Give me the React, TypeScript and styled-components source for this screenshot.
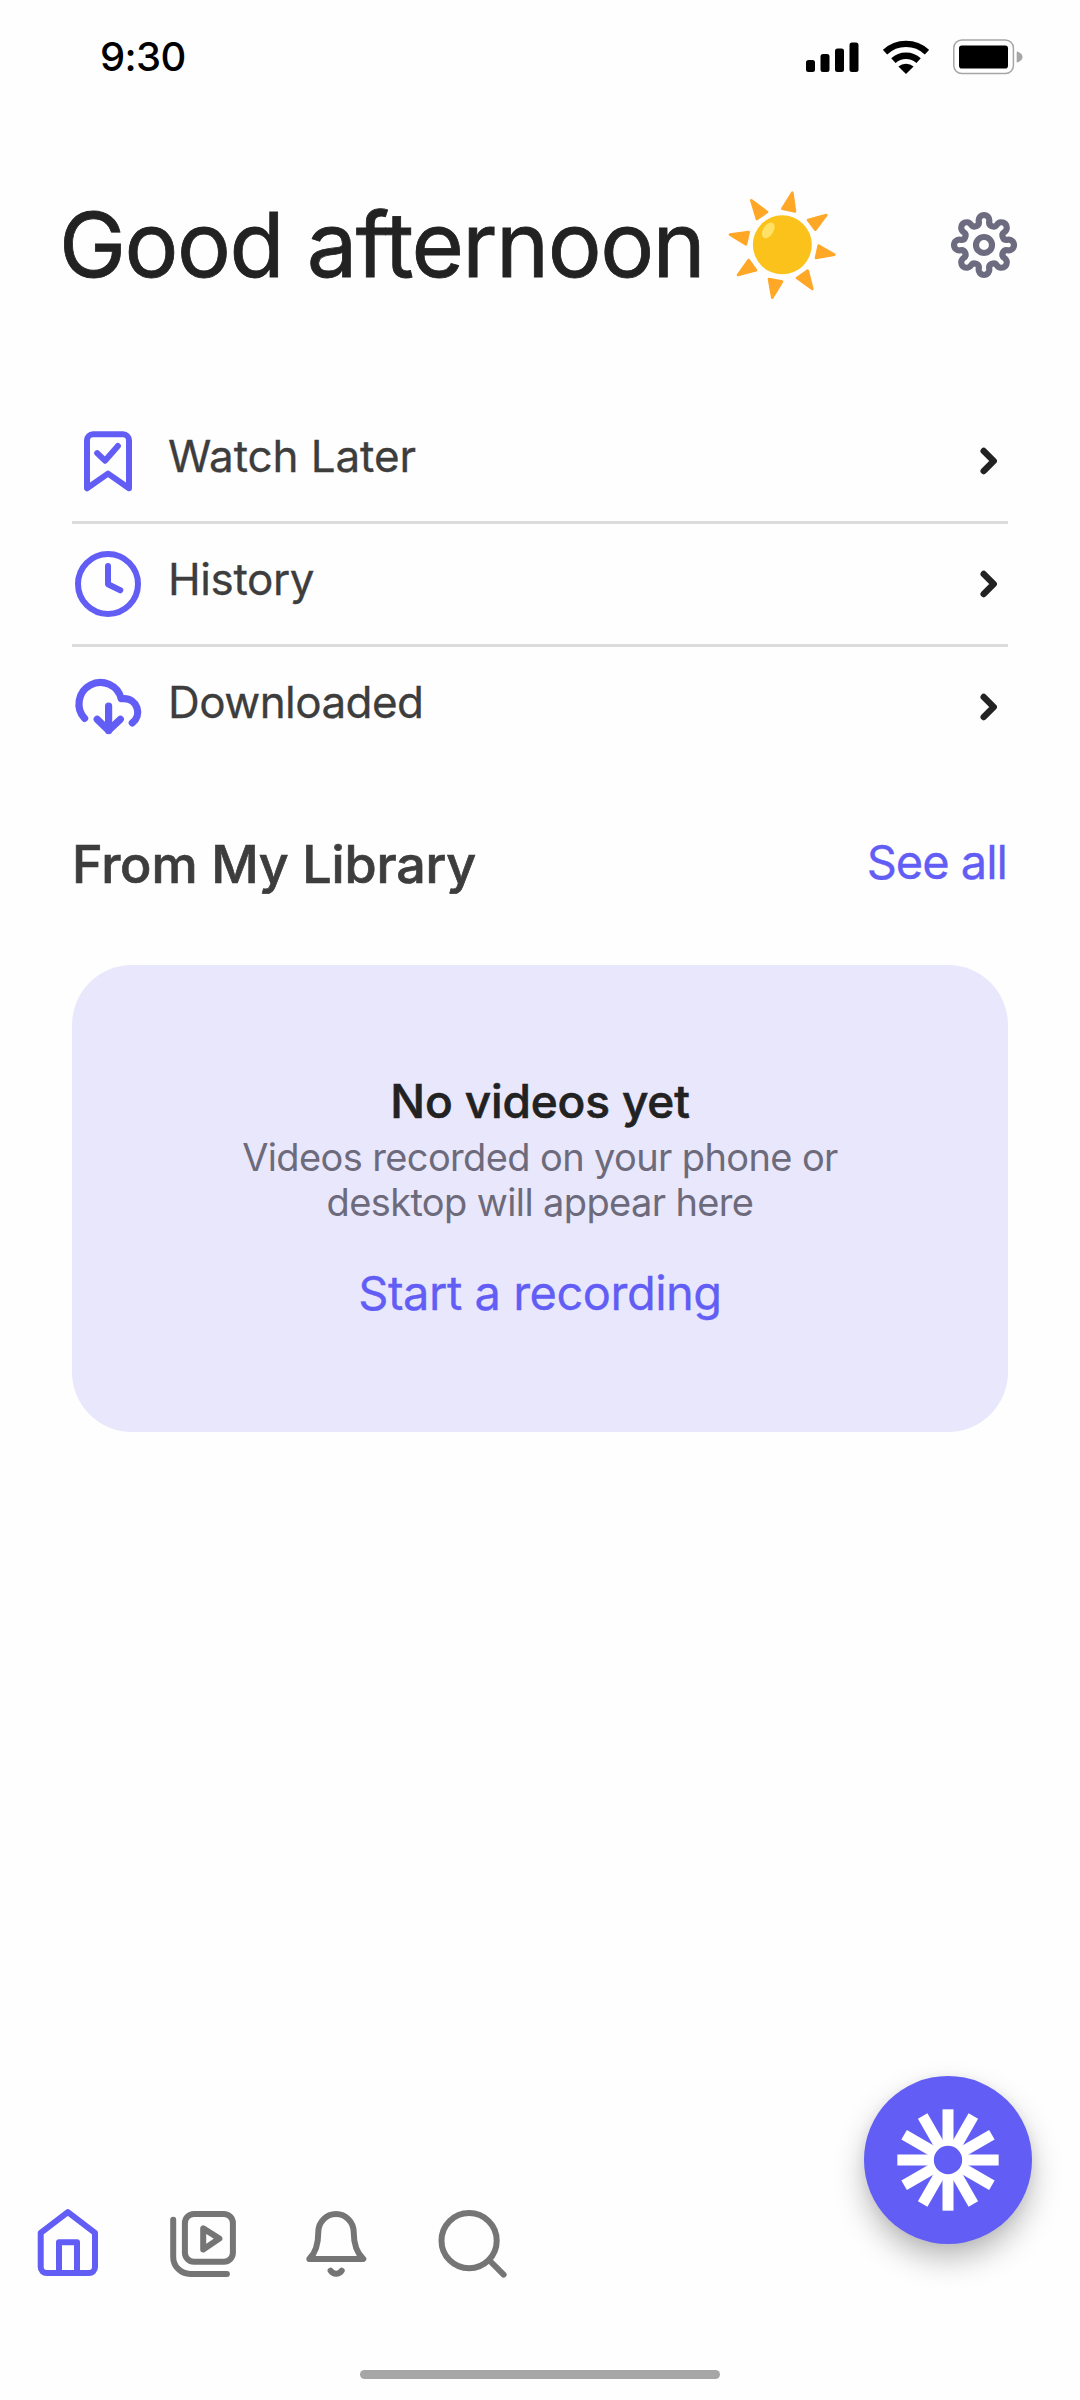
import React from "react";
import styled, { createGlobalStyle } from "styled-components";

const GlobalStyle = createGlobalStyle`
  body { margin: 0; background: #fefefe; }
  *, *::before, *::after { box-sizing: border-box; }
`;

const accent = "#625df5";
const ink = "#222222";

const Screen = styled.main`
  position: relative;
  display: flex;
  flex-direction: column;
  width: 1080px;
  height: 2400px;
  overflow: hidden;
  background: #fefefe;
  color: ${ink};
  font-family: Inter, "Liberation Sans", sans-serif;
`;

const StatusBar = styled.header`
  display: flex;
  align-items: center;
  justify-content: space-between;
  height: 113px;
  padding: 0 57px 0 100px;
  color: #000;
`;

const Time = styled.span`
  font-size: 40px;
  font-weight: 500;
  line-height: 48px;
  letter-spacing: -0.6px;
`;

const StatusIcons = styled.div`
  display: flex;
  align-items: center;
  gap: 24px;
`;

const Greeting = styled.section`
  display: flex;
  align-items: center;
  height: 264px;
  padding: 0 60px 0 59px;
`;

const Title = styled.h1`
  margin: 0 21px 0 0;
  font-size: 90px;
  font-weight: 400;
  line-height: 110px;
  letter-spacing: -1.55px;
  white-space: nowrap;
  -webkit-text-stroke: 0.8px ${ink};
`;

const IconButton = styled.button`
  display: flex;
  margin: 0 0 0 auto;
  padding: 0;
  border: 0;
  background: none;
`;

const Menu = styled.ul`
  display: flex;
  flex-direction: column;
  margin: 24px 72px 0;
  padding: 0;
  list-style: none;
`;

const MenuRow = styled.li`
  display: flex;
  align-items: center;
  height: 123px;
  border-bottom: 3px solid #dcdcdc;

  &:last-child { border-bottom-color: transparent; }
`;

const MenuLabel = styled.span<{ $tracking: number }>`
  flex: 1;
  padding: 0 0 10px 24px;
  color: #3d3d3d;
  font-size: 44px;
  line-height: 56px;
  letter-spacing: ${(p) => p.$tracking}px;
  -webkit-text-stroke: 0.3px #3d3d3d;
`;

const SectionHead = styled.div`
  display: flex;
  align-items: center;
  justify-content: space-between;
  height: 60px;
  margin: 64px 73px 71px 72px;
`;

const SectionTitle = styled.h2`
  margin: 0;
  padding-top: 1px;
  color: #3d3d3d;
  font-size: 52px;
  font-weight: 500;
  line-height: 60px;
  letter-spacing: -0.15px;
  -webkit-text-stroke: 0.7px #3d3d3d;
`;

const LinkText = styled.a<{ $tracking: number }>`
  color: ${accent};
  font-size: 47px;
  line-height: 56px;
  letter-spacing: ${(p) => p.$tracking}px;
  -webkit-text-stroke: 0.3px ${accent};
`;

const SeeAll = styled(LinkText)`
  padding-bottom: 5px;
`;

const EmptyCard = styled.section`
  display: flex;
  flex-direction: column;
  align-items: center;
  height: 467px;
  margin: 0 72px;
  padding-top: 102px;
  border-radius: 60px;
  background: #e9e7fc;
  text-align: center;
`;

const CardTitle = styled.h3`
  margin: 0;
  font-size: 46px;
  font-weight: 500;
  line-height: 68px;
  letter-spacing: -0.15px;
  -webkit-text-stroke: 0.6px ${ink};
`;

const CardText = styled.p`
  margin: 0 0 40px;
  color: #6d6b7b;
  font-size: 38px;
  line-height: 45px;
  letter-spacing: -0.62px;
`;

const TabBar = styled.nav`
  display: flex;
  gap: 62px;
  margin-top: auto;
  padding: 0 32px 90px;
  color: #757575;
`;

const Tab = styled.a<{ $active?: boolean }>`
  display: flex;
  color: ${(p) => (p.$active ? accent : "inherit")};
`;

const HomeIndicator = styled.div`
  flex: none;
  width: 360px;
  height: 9px;
  margin: 0 auto 21px;
  border-radius: 5px;
  background: #a6a6a6;
`;

const RecordButton = styled.button`
  position: absolute;
  right: 48px;
  bottom: 156px;
  display: flex;
  align-items: center;
  justify-content: center;
  width: 168px;
  height: 168px;
  padding: 0;
  border: 0;
  border-radius: 50%;
  background: ${accent};
  box-shadow: 0 15px 30px rgba(0, 0, 0, 0.26), 0 2px 12px rgba(0, 0, 0, 0.06);
`;

const StrokeSvg = styled.svg<{ $weight?: number }>`
  flex: none;
  display: block;
  width: 72px;
  height: 72px;
  overflow: visible;
  fill: none;
  stroke: currentColor;
  stroke-width: ${(p) => p.$weight ?? 2};
  stroke-linecap: round;
  stroke-linejoin: round;
`;

const AccentIcon = styled(StrokeSvg)`
  color: ${accent};
`;

const GearSvg = styled(StrokeSvg)`
  color: #6d6b7f;
`;

const ChevronSvg = styled.svg`
  flex: none;
  display: block;
  margin-right: 11px;
`;

/* Eight round lobes joined by eight concave notches. */
function gearPath() {
  const lobeR = 16;
  const notchR = 12.85;
  const ring = 74;
  const at = (deg: number, r: number) => {
    const a = (deg * Math.PI) / 180;
    return [r * Math.sin(a), -r * Math.cos(a)];
  };
  const join = (lobeDeg: number, notchDeg: number) => {
    const l = at(lobeDeg, ring);
    const n = at(notchDeg, ring);
    const t = lobeR / (lobeR + notchR);
    return `${(l[0] + (n[0] - l[0]) * t).toFixed(2)} ${(l[1] + (n[1] - l[1]) * t).toFixed(2)}`;
  };
  let d = `M${join(0, -22.5)}`;
  for (let i = 0; i < 8; i++) {
    const a = i * 45;
    d += `A${lobeR} ${lobeR} 0 1 1 ${join(a, a + 22.5)}`;
    d += `A${notchR} ${notchR} 0 0 0 ${join(a + 45, a + 22.5)}`;
  }
  return d + "Z";
}

const Gear = () => (
  <GearSvg viewBox="-108 -108 216 216" $weight={18.5}>
    <path d={gearPath()} />
    <circle r="24" />
  </GearSvg>
);

const Sun = () => (
  <svg width="115" height="115" viewBox="500 532 345 345">
    <g fill="#ffa726" stroke="#ffa726" strokeWidth="8" strokeLinejoin="round">
      <path d="M702 546 710 602 672 594Z" />
      <path d="M804 613 771 657 749 628Z" />
      <path d="M828 732 773 742 781 705Z" />
      <path d="M762 835 716 802 748 780Z" />
      <path d="M642 861 632 805 671 813Z" />
      <path d="M539 793 571 748 593 779Z" />
      <path d="M515 672 571 664 563 701Z" />
      <path d="M579 569 626 604 596 625Z" />
    </g>
    <circle cx="672" cy="702.5" r="88.5" fill="#fbc21c" />
    <ellipse cx="630" cy="659" rx="15.5" ry="26" transform="rotate(32 630 659)" fill="#ffe265" />
  </svg>
);

const Signal = () => (
  <svg width="53" height="30" viewBox="0 0 53 30">
    <rect x="0" y="18" width="9" height="12" rx="2.5" />
    <rect x="14.5" y="12" width="9" height="18" rx="2.5" />
    <rect x="29" y="6.5" width="9" height="23.5" rx="2.5" />
    <rect x="43.5" y="0.5" width="9" height="29.5" rx="2.5" />
  </svg>
);

const Wifi = () => (
  <svg width="46" height="34" viewBox="0 0 46 34">
    <path d="M23 34l-7.6-7.4a11.5 11.5 0 0 1 15.2 0Z" />
    <g fill="none" stroke="#000" strokeWidth="6.4">
      <path d="M10.4 20.6a18.6 18.6 0 0 1 25.2 0" />
      <path d="M2 12.2a30.6 30.6 0 0 1 42 0" />
    </g>
  </svg>
);

const Battery = () => (
  <svg width="70" height="36" viewBox="0 0 70 36">
    <rect x="0.8" y="1" width="59.6" height="33.6" rx="8" fill="#fff" stroke="#a6a6a6" strokeWidth="1.5" />
    <rect x="6" y="6.5" width="49" height="23" rx="2.8" />
    <path d="M63.7 12.4c3.4.8 5.8 3 5.8 5.5s-2.4 4.7-5.8 5.5Z" fill="#a6a6a6" />
  </svg>
);

const BookmarkCheck = () => (
  <AccentIcon viewBox="0 0 24 24">
    <path d="M5 21.1V5.1a2 2 0 0 1 2-2h10a2 2 0 0 1 2 2v16l-7-4.9Z" />
    <path d="M8.4 9.4 11 11.9 15.3 7" />
  </AccentIcon>
);

const Clock = () => (
  <AccentIcon viewBox="0 0 24 24">
    <circle cx="12" cy="12" r="10" />
    <path d="M12 6v6.1l4.1 2" />
  </AccentIcon>
);

const CloudDownload = () => (
  <AccentIcon viewBox="0 0 24 24" $weight={2.4}>
    <path d="M4.2 15.8A7.15 7.15 0 1 1 16.4 9.2h1A4.5 4.5 0 0 1 20.1 17.3" />
    <path d="M12.2 11.7v8.2M8.4 16.1l3.8 3.7 3.9-3.7" />
  </AccentIcon>
);

const Chevron = () => (
  <ChevronSvg width="18" height="28" viewBox="0 0 18 28">
    <path d="M4.7 4l10 10-10 10" fill="none" stroke={ink} strokeWidth="6.4" strokeLinecap="round" strokeLinejoin="round" />
  </ChevronSvg>
);

const HomeIcon = () => (
  <StrokeSvg viewBox="0 0 24 24">
    <path d="M11.95 1.4 21 8.3v11.4a2 2 0 0 1-2 2H4.9a2 2 0 0 1-2-2V8.3Z" />
    <path d="M9 21.4v-10h6v10" />
  </StrokeSvg>
);

const LibraryIcon = () => (
  <StrokeSvg viewBox="0 0 24 24">
    <path d="M2.4 3.9v12.4a5.7 5.7 0 0 0 5.7 5.7h12.2" />
    <rect x="6.3" y="2" width="16" height="15.9" rx="3" />
    <path d="M12.4 6.8v7l5.4-3.6Z" />
  </StrokeSvg>
);

const BellIcon = () => (
  <StrokeSvg viewBox="0 0 24 24">
    <path d="M3.1 17c2-1.9 3-5 3-9a5.9 6 0 0 1 11.8 0c0 4 1.2 7.1 3.2 9Z" />
    <path d="M10.2 20.9a2.2 2.2 0 0 0 3.7 0" />
  </StrokeSvg>
);

const SearchIcon = () => (
  <StrokeSvg viewBox="0 0 24 24">
    <circle cx="11.7" cy="10.9" r="9.2" />
    <path d="M18.5 17.5 23.2 22.2" />
  </StrokeSvg>
);

const Burst = () => (
  <svg width="102" height="102" viewBox="-153 -153 306 306">
    {Array.from({ length: 12 }, (_, i) => (
      <rect key={i} x="-16.5" y="-152" width="33" height="105" fill="#fff" transform={`rotate(${i * 30})`} />
    ))}
    <circle r="51" fill="none" stroke="#fff" strokeWidth="17" />
  </svg>
);

const menu = [
  { label: "Watch Later", Icon: BookmarkCheck, tracking: -0.1 },
  { label: "History", Icon: Clock, tracking: -0.4 },
  { label: "Downloaded", Icon: CloudDownload, tracking: -0.57 },
];

export default function App() {
  return (
    <Screen>
      <GlobalStyle />
      <StatusBar>
        <Time>9:30</Time>
        <StatusIcons>
          <Signal />
          <Wifi />
          <Battery />
        </StatusIcons>
      </StatusBar>
      <Greeting>
        <Title>Good afternoon</Title>
        <Sun />
        <IconButton aria-label="Settings">
          <Gear />
        </IconButton>
      </Greeting>
      <Menu>
        {menu.map(({ label, Icon, tracking }) => (
          <MenuRow key={label}>
            <Icon />
            <MenuLabel $tracking={tracking}>{label}</MenuLabel>
            <Chevron />
          </MenuRow>
        ))}
      </Menu>
      <SectionHead>
        <SectionTitle>From My Library</SectionTitle>
        <SeeAll $tracking={-1}>See all</SeeAll>
      </SectionHead>
      <EmptyCard>
        <CardTitle>No videos yet</CardTitle>
        <CardText>
          Videos recorded on your phone or
          <br />
          desktop will appear here
        </CardText>
        <LinkText $tracking={-0.5}>Start a recording</LinkText>
      </EmptyCard>
      <TabBar>
        <Tab $active aria-label="Home"><HomeIcon /></Tab>
        <Tab aria-label="Library"><LibraryIcon /></Tab>
        <Tab aria-label="Notifications"><BellIcon /></Tab>
        <Tab aria-label="Search"><SearchIcon /></Tab>
      </TabBar>
      <HomeIndicator />
      <RecordButton aria-label="Record">
        <Burst />
      </RecordButton>
    </Screen>
  );
}
